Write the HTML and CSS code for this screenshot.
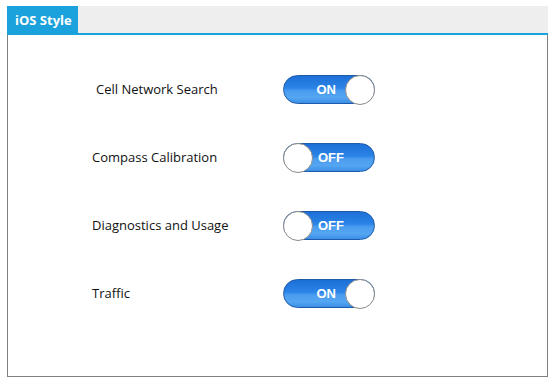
FILE: index.html
```html
<!DOCTYPE html>
<html>
<head>
<meta charset="utf-8">
<link rel="stylesheet" href="styles.css">
</head>
<body>
<div class="widget">
  <div class="tabstrip">
    <div class="tab">iOS Style</div>
  </div>
  <div class="panel">
    <div class="row">
      <span class="label label-indent">Cell Network Search</span>
      <div class="switch on"><span class="switch-text">ON</span><span class="knob"></span></div>
    </div>
    <div class="row">
      <span class="label">Compass Calibration</span>
      <div class="switch off"><span class="knob"></span><span class="switch-text">OFF</span></div>
    </div>
    <div class="row">
      <span class="label">Diagnostics and Usage</span>
      <div class="switch off"><span class="knob"></span><span class="switch-text">OFF</span></div>
    </div>
    <div class="row">
      <span class="label">Traffic</span>
      <div class="switch on"><span class="switch-text">ON</span><span class="knob"></span></div>
    </div>
  </div>
</div>
</body>
</html>
```
FILE: styles.css
```css
html, body {
  margin: 0;
  padding: 0;
  background: #ffffff;
}
body {
  font-family: "Open Sans", "Noto Sans", sans-serif;
}
.widget {
  margin: 6px 0 0 7px;
  width: 541px;
}
.tabstrip {
  display: flex;
  height: 27px;
  background: #eeeeee;
  border-bottom: 2px solid #1ba1dc;
}
.tab {
  background: #1ba1dc;
  color: #ffffff;
  font-weight: 700;
  font-size: 13px;
  width: 71px;
  box-sizing: border-box;
  padding-left: 8px;
  line-height: 29px;
}
.panel {
  height: 342px;
  box-sizing: border-box;
  border: 1px solid #808080;
  border-top: none;
  padding: 40px 0 0 84px;
  display: flex;
  flex-direction: column;
  gap: 39px;
}
.row {
  display: flex;
  align-items: center;
  height: 29px;
}
.label {
  width: 191px;
  font-size: 13px;
  color: #111111;
  margin-top: -2px;
}
.label-indent {
  padding-left: 4px;
  width: 187px;
}
.switch {
  width: 92px;
  height: 29px;
  box-sizing: border-box;
  border-radius: 15px;
  border: 1px solid #1f5aa8;
  background: linear-gradient(to bottom, #1d6fd8 0%, #2b84e6 45%, #4a9cef 55%, #54a6f2 80%, #3a8ee6 100%);
  display: flex;
  align-items: center;
  position: relative;
}
.switch-text {
  flex: 1;
  color: #ffffff;
  font-weight: 700;
  font-size: 13px;
  font-family: "Liberation Sans", Arial, sans-serif;
}
.on .switch-text {
  text-align: right;
  padding-right: 9px;
}
.off .switch-text {
  text-align: left;
  padding-left: 5px;
}
.knob {
  width: 30px;
  height: 30px;
  box-sizing: border-box;
  border-radius: 50%;
  background: #ffffff;
  border: 1px solid #8a8a8a;
  flex: none;
}
.on .knob {
  margin-right: -1px;
}
.off .knob {
  margin-left: -1px;
}
```
